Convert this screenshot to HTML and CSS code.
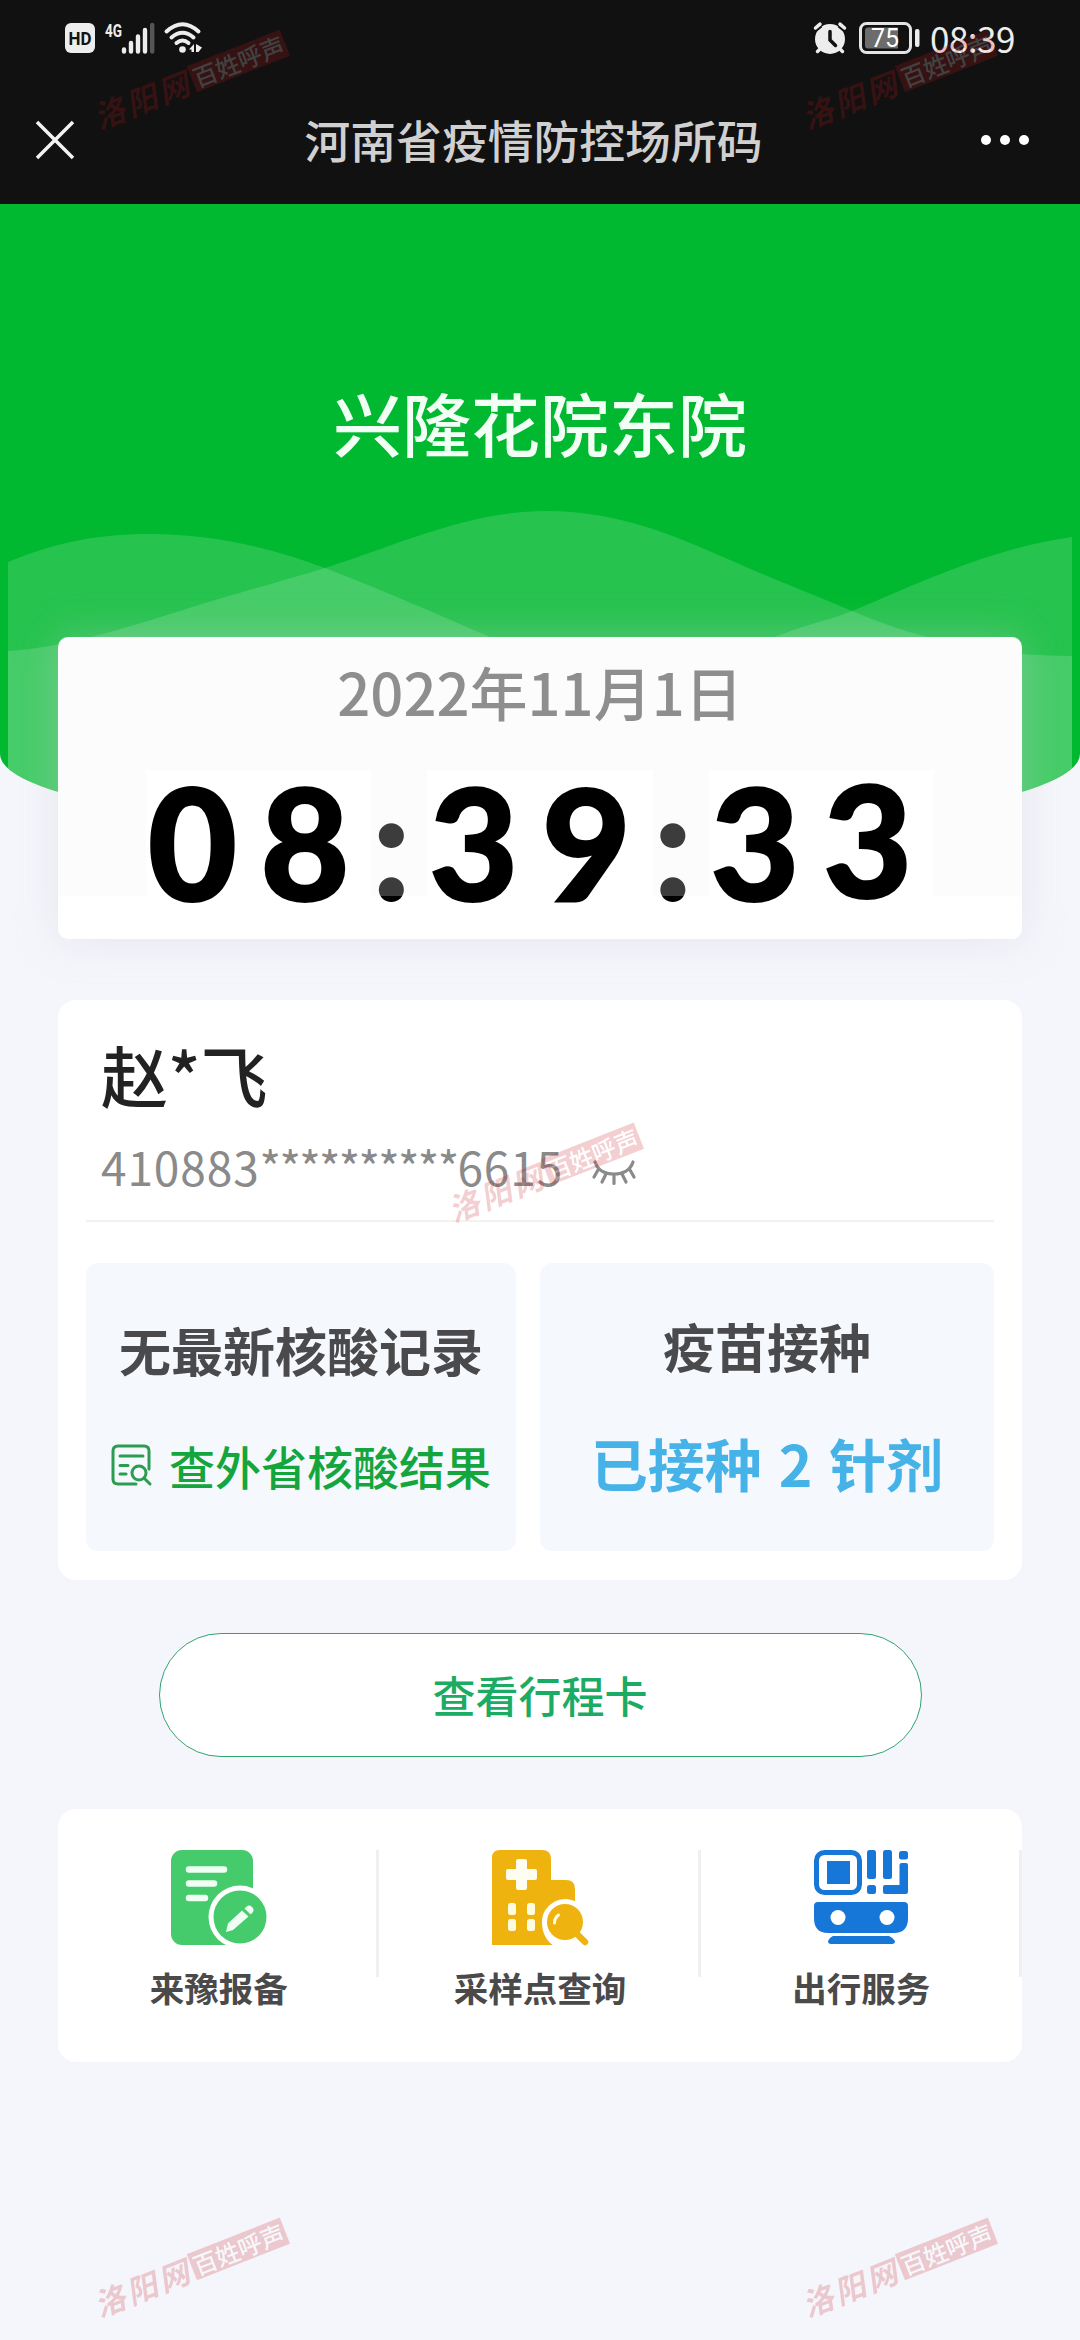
FILE: index.html
```
<!DOCTYPE html>
<html lang="zh-CN">
<head>
  <meta charset="UTF-8" />
  <meta name="viewport" content="width=device-width, initial-scale=1.0"/>
  <title>河南省疫情防控场所码</title>
  <link rel="stylesheet" href="styles.css">
</head>
<body>

  <header class="topbar">
    <div class="status">
      <div class="status-left">
        <svg width="30" height="30" viewBox="0 0 30 30">
          <rect width="30" height="30" rx="6" fill="#ededed"/>
          <text x="15" y="22" class="hd" textLength="23" lengthAdjust="spacingAndGlyphs">HD</text>
        </svg>
        <svg class="signal" width="52" height="38" viewBox="0 -3 52 38">
          <text x="1" y="15" class="net" textLength="17" lengthAdjust="spacingAndGlyphs">4G</text>
          <g stroke="#ededed" stroke-width="4.400" stroke-linecap="round">
            <path d="M20 27.500v2M27 21v8.500M34 14.500v15M41 8v21.500"/>
            <path d="M48.200 3v26.500" stroke="#555"/>
          </g>
        </svg>
        <svg class="wifi" width="40" height="32" viewBox="0 0 40 32">
          <g fill="none" stroke="#ededed" stroke-width="4" stroke-linecap="round">
            <path d="M2.500 9.500Q18.500 -5 34.500 9.500"/>
            <path d="M7.500 15.500Q18.500 6 29.500 15.500"/>
            <path d="M12.500 21Q18.500 16 24.500 21"/>
          </g>
          <circle cx="18.500" cy="27.500" r="3.300" fill="#ededed"/>
          <path d="M30 22v8h-2.500v-2.500H25zM32 30v-8l6 3.500-3.500 4.500z" fill="#ededed"/>
        </svg>
      </div>
      <div class="status-right">
        <svg width="34" height="32" viewBox="0 0 34 32">
          <circle cx="17" cy="17" r="15" fill="#ededed"/>
          <path d="M2 6.500l5-4M32 6.500l-5-4" stroke="#111" stroke-width="7"/>
          <path d="M2.500 6l4.500-3.800M31.500 6l-4.500-3.800M6.500 27.500l-2 2M27.500 27.500l2 2" stroke="#ededed" stroke-width="3.500" stroke-linecap="round"/>
          <path d="M17 9.500v8.500l5.500 5.500" stroke="#111" stroke-width="3.500" stroke-linecap="round" fill="none"/>
        </svg>
        <svg class="battery" width="62" height="32" viewBox="0 0 62 32">
          <rect x="1.500" y="1.500" width="50" height="29" rx="6" fill="none" stroke="#e4e4e4" stroke-width="3"/>
          <path d="M9 5.500h30v21H9q-3 0-3-3v-15q0-3 3-3z" fill="#6c6c6c"/>
          <rect x="56" y="7" width="4.500" height="18" rx="2" fill="#ededed"/>
          <text x="26" y="25" class="percent">75</text>
        </svg>
        <span class="time">08:39</span>
      </div>
    </div>
    <div class="nav">
      <svg width="38" height="38" viewBox="0 0 38 38"><path d="M1 1l36 36M37 1L1 37" stroke="#f2f2f2" stroke-width="3.500"/></svg>
      <h1>河南省疫情防控场所码</h1>
      <svg width="50" height="10" viewBox="0 0 50 10" fill="#fff"><circle cx="6" cy="5" r="5"/><circle cx="25" cy="5" r="5"/><circle cx="44" cy="5" r="5"/></svg>
    </div>
  </header>

  <section class="hero">
    <svg class="waves" width="1064" height="334" viewBox="8 504 1064 334" fill="#fff" fill-opacity="0.150">
      <path d="M8 562C55 543 95 534 150 534C215 534 275 549 325 568C380 589 430 611 490 637C560 668 700 668 780 635C807 624 830 620 852 611C905 590 985 549 1072 537V838H8z"/>
      <path d="M8 651C60 648 120 630 180 611C230 595 275 583 325 568C400 544 470 511 545 511C620 511 675 536 730 560C775 580 820 597 852 611C905 633 975 656 1072 656V838H8z"/>
    </svg>
    <h2>兴隆花院东院</h2>
  </section>

  <main>
    <section class="clock">
      <div class="date">2022年11月1日</div>
      <div class="digits">
        <span>0</span><span>8</span><i>:</i><span>3</span><span>9</span><i>:</i><span>3</span><span class="flip">3</span>
      </div>
    </section>

    <section class="card profile">
      <div class="name">赵*飞</div>
      <div class="idcard">
        <span>410883</span><span class="mask">**********</span><span>6615</span>
        <svg width="44" height="26" viewBox="0 0 44 26" fill="none" stroke="#8a8a8a" stroke-width="3.200" stroke-linecap="round">
          <path d="M3 2Q7 14 22 14Q37 14 41 2M6 10l-4 7M14 14l-4 8M22 15v8.500M30 14l4 8M38 10l4 7"/>
        </svg>
      </div>
      <div class="records">
        <div class="record test">
          <h3>无最新核酸记录</h3>
          <a class="query">
            <svg width="41" height="42" viewBox="0 0 41 42" fill="none" stroke="#2c9d50" stroke-width="3" stroke-linecap="round">
              <path d="M25 40H7q-5 0-5-5V7q0-5 5-5h26q5 0 5 5v18M9 12h23M9 21.500h8M9 30h6"/>
              <circle cx="28" cy="29" r="7"/>
              <path d="M33 34l6 6"/>
            </svg>
            <span>查外省核酸结果</span>
          </a>
        </div>
        <div class="record vaccine">
          <h3>疫苗接种</h3>
          <strong>已接种 2 针剂</strong>
        </div>
      </div>
    </section>

    <a class="trip">查看行程卡</a>

    <section class="card services">
      <div class="service">
        <svg width="96" height="96" viewBox="0 0 96 96">
          <rect width="82" height="95" rx="11" fill="#45cb6b"/>
          <path d="M18 19.500h35M18 33.500h25M18 48h16" stroke="#effff3" stroke-width="6.500" stroke-linecap="round"/>
          <circle cx="69" cy="67" r="31.500" fill="#fff"/>
          <circle cx="69" cy="67" r="26.500" fill="#45cb6b"/>
          <path d="M71 60.500l6.500 6L62 80l-7 2 2-8.500zM73.500 58.500l2.500-2.300q2.500-1.500 5 .8t1 5l-2.300 2.500z" fill="#effff3"/>
        </svg>
        <span>来豫报备</span>
      </div>
      <div class="service">
        <svg width="96" height="96" viewBox="0 0 96 96">
          <path d="M8 0h42q9 0 9 9v21h15q9 0 9 9v56H0V8q0-8 8-8z" fill="#efb310"/>
          <path d="M26 9h7q2 0 2 2v8h8q2 0 2 2v7q0 2-2 2h-8v8q0 2-2 2h-7q-2 0-2-2v-8h-8q-2 0-2-2v-7q0-2 2-2h8v-8q0-2 2-2z" fill="#fffdf0"/>
          <g fill="#fffbe0"><rect x="16" y="53" width="8" height="12" rx="2.500"/><rect x="35" y="53" width="8" height="12" rx="2.500"/><rect x="16" y="69" width="8" height="12" rx="2.500"/><rect x="35" y="69" width="8" height="12" rx="2.500"/></g>
          <path d="M50 72a23 23 0 0 1 36-19V96H62Q50 88 50 72z" fill="#fff"/>
          <circle cx="73" cy="72" r="18" fill="#efb310"/>
          <path d="M85 84l8 8" stroke="#efb310" stroke-width="6.500" stroke-linecap="round"/>
          <path d="M62.500 73q0-5 4-8" stroke="#fffbe0" stroke-width="3" stroke-linecap="round" fill="none"/>
        </svg>
        <span>采样点查询</span>
      </div>
      <div class="service">
        <svg width="96" height="96" viewBox="0 0 96 96" fill="#1777d8">
          <rect x="3.500" y="2.500" width="43" height="40" rx="8" fill="none" stroke="#1777d8" stroke-width="5"/>
          <rect x="14" y="11" width="23" height="23"/>
          <rect x="54" y="0" width="9" height="29" rx="2.500"/><rect x="54" y="35" width="9" height="9" rx="2.500"/>
          <rect x="70" y="0" width="9" height="29" rx="2.500"/><rect x="86" y="1" width="9" height="8.500" rx="2.500"/>
          <path d="M88.500 13H93q2 0 2 2v26.500q0 2.500-2.500 2.500H72q-2 0-2-2v-5q0-2 2-2h14.500V15q0-2 2-2z"/>
          <path d="M5 52h86q4 0 4 4v12q0 15-14 15H15Q1 83 1 68V56q0-4 4-4z"/>
          <path d="M20 86h56q3 1 6 5 0 3-3 3H18q-3 0-3-3 2-4 5-5z"/>
          <circle cx="25" cy="67.500" r="7.500" fill="#fff"/><circle cx="74" cy="67.500" r="7.500" fill="#fff"/>
        </svg>
        <span>出行服务</span>
      </div>
    </section>
  </main>

  <div class="stamp stamp-tl"><em>洛阳网</em><b>百姓呼声</b></div>
  <div class="stamp stamp-tr"><em>洛阳网</em><b>百姓呼声</b></div>
  <div class="stamp stamp-mid"><em>洛阳网</em><b>百姓呼声</b></div>
  <div class="stamp stamp-bl"><em>洛阳网</em><b>百姓呼声</b></div>
  <div class="stamp stamp-br"><em>洛阳网</em><b>百姓呼声</b></div>

</body>
</html>
```
FILE: styles.css
```
/* ─── Reset & Body ───────────────────────────────────────────────────────── */
* { box-sizing: border-box; margin: 0; padding: 0; }
body {
  position: relative;
  width: 1080px;
  height: 2340px;
  overflow: hidden;
  background: #f4f6fb;
  font-family: "Noto Sans CJK SC", sans-serif;
}
svg { display: block; flex: none; overflow: visible; }

/* ─── Status & Nav ───────────────────────────────────────────────────────── */
.topbar { height: 204px; background: #111; }
.status {
  display: flex;
  justify-content: space-between;
  height: 76px;
  padding: 0 64px 0 65px;
}
.status-left, .status-right { display: flex; align-items: center; }
.signal { margin-left: 9px; }
.wifi { margin-left: 8px; }
.battery { margin-left: 12px; }
.hd { font: 700 19px Roboto, sans-serif; fill: #111; text-anchor: middle; }
.net { font: 700 19px Roboto, sans-serif; fill: #ededed; }
.percent { font: 400 25px Roboto, sans-serif; fill: #fff; text-anchor: middle; }
.time {
  width: 86px;
  margin-left: 9px;
  font-size: 35px;
  line-height: 72px;
  letter-spacing: -0.5px;
  color: #ededed;
  white-space: nowrap;
}
.nav {
  display: flex;
  align-items: center;
  justify-content: space-between;
  height: 128px;
  padding: 0 50px 0 36px;
}
.nav h1 {
  margin: -2px 0 0 13px;
  font-size: 45.8px;
  font-weight: 500;
  line-height: 70px;
  color: #d0d0d0;
}

/* ─── Hero ───────────────────────────────────────────────────────────────── */
.hero {
  position: relative;
  height: 634px;
  padding-top: 178px;
  overflow: hidden;
  background: #01b930;
  border-radius: 0 0 50% 50% / 0 0 84px 84px;
}
.waves { position: absolute; left: 8px; bottom: 0; }
.hero h2 {
  position: relative;
  font-size: 69px;
  font-weight: 500;
  line-height: 80px;
  text-align: center;
  color: #f2fff5;
}
main { position: relative; padding: 0 58px; margin-top: -201px; }

/* ─── Clock ──────────────────────────────────────────────────────────────── */
.clock {
  height: 302px;
  padding-top: 14px;
  border-radius: 10px;
  background: linear-gradient(#fcfcfc 259px, #fff 259px);
  box-shadow: 0 0 40px rgba(200, 200, 215, 0.35);
}
.date {
  font-size: 58px;
  font-weight: 500;
  line-height: 80px;
  text-align: center;
  color: #8e8e8e;
}
.digits {
  display: flex;
  width: 788px;
  height: 152px;
  margin: 39px 0 0 88px;
  font: 900 154px/144px Lato, sans-serif;
}
.digits span {
  width: 112.7px;
  padding-right: 20px;
  text-align: center;
  color: #000;
  background: #fff;
  -webkit-text-stroke: 2px #000;
}
.digits .flip { line-height: 138px; }
.digits i {
  width: 56px;
  padding-right: 17px;
  font-style: normal;
  text-align: center;
  color: transparent;
  background: linear-gradient(#3c3c3c 126px, #000 126px);
  -webkit-background-clip: text;
  background-clip: text;
}

/* ─── Profile ────────────────────────────────────────────────────────────── */
.card { background: #fff; border-radius: 18px; }
.profile { height: 580px; margin-top: 61px; padding: 34px 28px 0; }
.name {
  padding-left: 15px;
  font-size: 67px;
  font-weight: 500;
  line-height: 80px;
  color: #222;
}
.idcard {
  display: flex;
  align-items: center;
  height: 108px;
  padding: 0 0 2px 15px;
  border-bottom: 2px solid #f2f2f3;
  font-size: 46px;
  line-height: 60px;
  letter-spacing: 0.9px;
  color: #8a8a8a;
}
.mask { letter-spacing: -1.7px; }
.idcard svg { margin: 14px 0 0 29px; }
.records { display: flex; gap: 24px; margin-top: 41px; }
.record {
  display: flex;
  flex-direction: column;
  align-items: center;
  height: 288px;
  border-radius: 12px;
  background: #f5f9fe;
}
.record h3 { font-size: 52px; font-weight: 700; line-height: 70px; color: #4a4a4c; }
.test { width: 430px; padding-top: 52px; }
.vaccine { width: 454px; padding-top: 48px; }
.query {
  display: flex;
  align-items: center;
  gap: 17px;
  margin-top: 50px;
  font-size: 46px;
  font-weight: 500;
  line-height: 60px;
  color: #14a63c;
}
.vaccine strong {
  margin-top: 46px;
  font-size: 57px;
  line-height: 70px;
  word-spacing: 4px;
  color: #45b2e8;
}

/* ─── Trip Button ────────────────────────────────────────────────────────── */
.trip {
  display: block;
  width: 763px;
  height: 124px;
  margin: 53px auto 0;
  border: 1.5px solid #31a36f;
  border-radius: 62px;
  background: #fff;
  font-size: 43px;
  font-weight: 500;
  line-height: 121px;
  text-align: center;
  color: #1bab63;
}

/* ─── Services ───────────────────────────────────────────────────────────── */
.services { display: flex; height: 253px; margin-top: 52px; padding-top: 41px; }
.service {
  position: relative;
  flex: 1;
  display: flex;
  flex-direction: column;
  align-items: center;
  gap: 19px;
  font-size: 34.5px;
  font-weight: 700;
  line-height: 44px;
  color: #4a4a4a;
}
.service::after {
  content: "";
  position: absolute;
  top: 0;
  right: 0;
  width: 3px;
  height: 127px;
  background: #f0f0f0;
}

/* ─── Stamps ─────────────────────────────────────────────────────────────── */
.stamp {
  position: absolute;
  display: flex;
  align-items: center;
  width: 204px;
  height: 28px;
  color: #c8161d;
  opacity: 0.2;
  transform: rotate(-21.5deg);
}
.stamp em {
  width: 104px;
  font-size: 31px;
  font-weight: 700;
  line-height: 28px;
  letter-spacing: 3px;
  white-space: nowrap;
}
.stamp b {
  width: 100px;
  font-size: 24px;
  font-weight: 500;
  line-height: 28px;
  text-align: center;
  color: #fff;
  background: #c8161d;
}
.stamp-tl { left: 88px; top: 66px; }
.stamp-tr { left: 796px; top: 66px; }
.stamp-mid { left: 442px; top: 1159px; }
.stamp-bl { left: 88px; top: 2254px; }
.stamp-br { left: 796px; top: 2254px; }
```
